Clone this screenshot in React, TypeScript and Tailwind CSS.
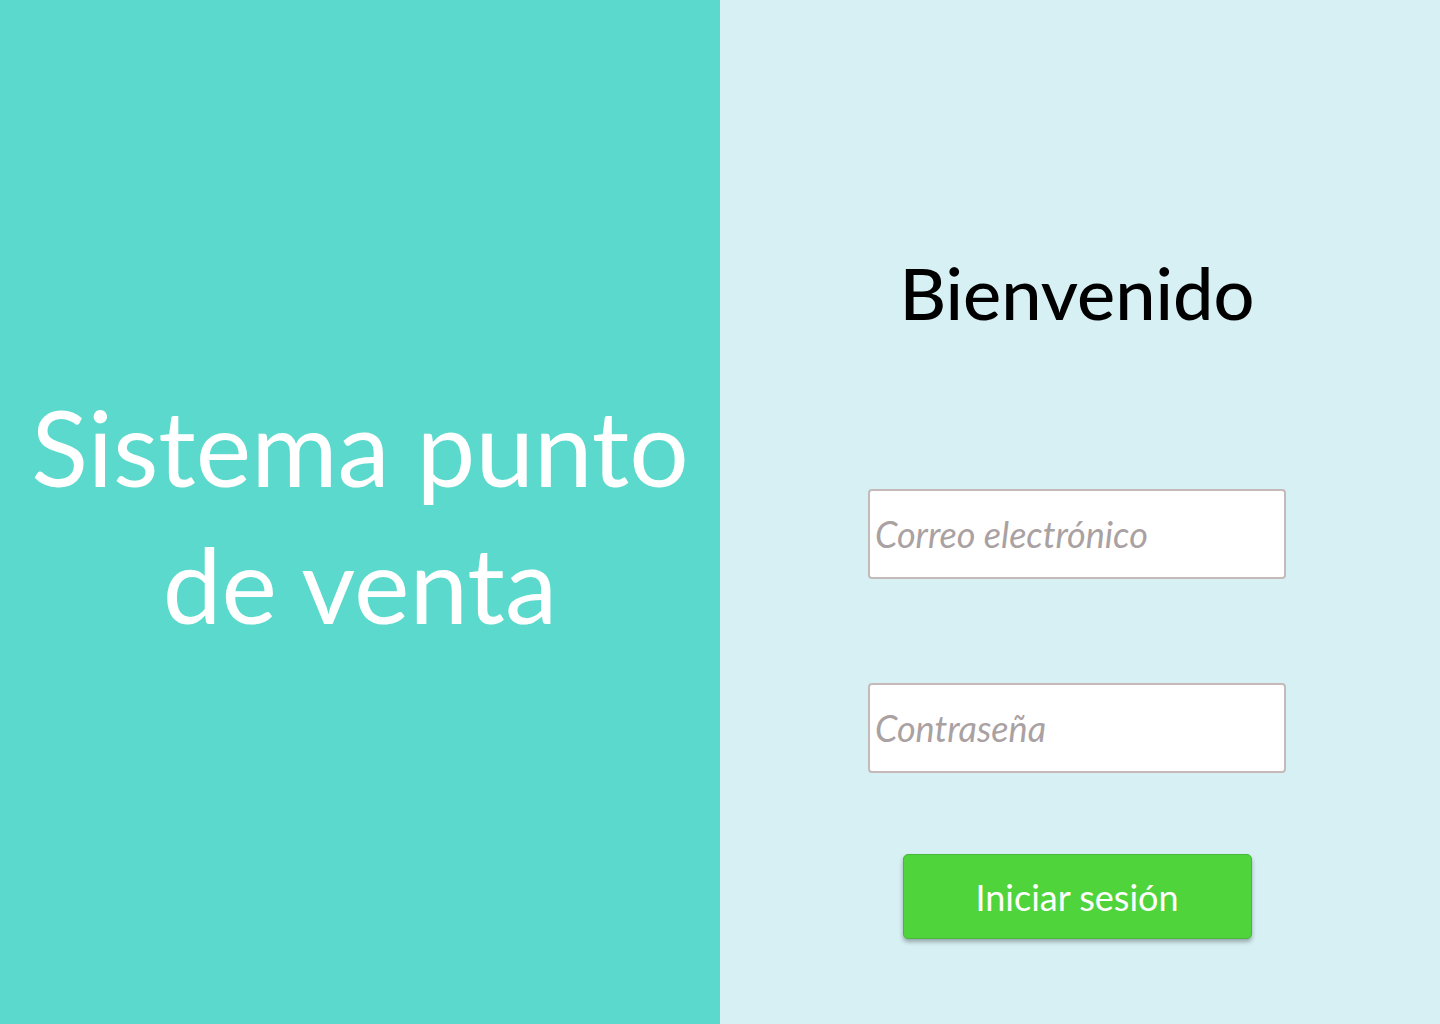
import React from "react";

export default function App() {
  return (
    <div className="flex h-[1024px] w-[1440px]">
      <div className="flex h-full w-[720px] items-center justify-center bg-[#5bd9cc] pt-[6px]">
        <h1
          className="text-center text-[105px] leading-[137px] text-white"
          style={{ fontFamily: "Lato, 'Noto Sans', sans-serif" }}
        >
          Sistema punto
          <br />
          de venta
        </h1>
      </div>
      <div
        className="flex h-full w-[720px] flex-col items-center bg-[#d7f0f4] pr-[6px]"
        style={{ fontFamily: "Lato, 'Noto Sans', sans-serif" }}
      >
        <h2 className="mt-[256px] text-[72px] font-medium leading-none text-black">Bienvenido</h2>
        <input
          type="email"
          placeholder="Correo electrónico"
          className="mt-[161px] h-[90px] w-[418px] rounded-[4px] border-2 border-[#c6b9ba] bg-white px-[5px] text-[36px] italic text-[#a89f9f] outline-none placeholder:text-[#aaa1a2]"
        />
        <input
          type="password"
          placeholder="Contraseña"
          className="mt-[104px] h-[90px] w-[418px] rounded-[4px] border-2 border-[#c6b9ba] bg-white px-[5px] text-[36px] italic text-[#a89f9f] outline-none placeholder:text-[#aaa1a2]"
        />
        <button
          type="button"
          className="mt-[81px] h-[85px] w-[349px] rounded-[5px] border border-[#47b83a] bg-[#4fd43c] text-[36px] text-white shadow-[0_3px_4px_rgba(0,0,0,0.3)]"
        >
          Iniciar sesión
        </button>
      </div>
    </div>
  );
}
